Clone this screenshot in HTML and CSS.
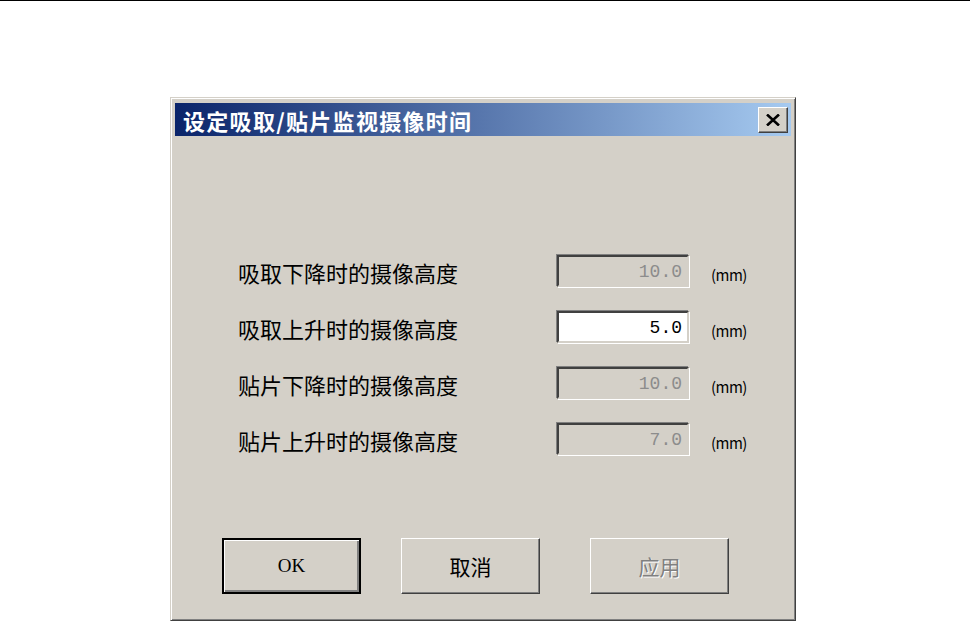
FILE: index.html
```html
<!DOCTYPE html>
<html lang="zh-CN">
<head>
    <meta charset="UTF-8">
    <title>设定吸取/贴片监视摄像时间</title>
    <link rel="stylesheet" href="styles.css">
</head>
<body>

<div class="top-rule"></div>

<div class="dialog">
    <div class="titlebar">
        <span class="title">设定吸取/贴片监视摄像时间</span>
        <button class="close-btn" type="button" aria-label="关闭">
            <svg width="14" height="12" viewBox="0 0 14 12">
                <path d="M1 0.5 L13 11.5 M13 0.5 L1 11.5" stroke="#000" stroke-width="2.6" fill="none"/>
            </svg>
        </button>
    </div>

    <div class="body">
        <div class="fields">
            <label class="field-label">吸取下降时的摄像高度</label>
            <input class="num" type="text" value="10.0" disabled>
            <span class="unit">(mm)</span>

            <label class="field-label">吸取上升时的摄像高度</label>
            <input class="num" type="text" value="5.0">
            <span class="unit">(mm)</span>

            <label class="field-label">贴片下降时的摄像高度</label>
            <input class="num" type="text" value="10.0" disabled>
            <span class="unit">(mm)</span>

            <label class="field-label">贴片上升时的摄像高度</label>
            <input class="num" type="text" value="7.0" disabled>
            <span class="unit">(mm)</span>
        </div>

        <div class="actions">
            <button class="btn btn-default" type="button">OK</button>
            <button class="btn btn-cancel" type="button">取消</button>
            <button class="btn btn-apply" type="button" disabled>应用</button>
        </div>
    </div>
</div>

</body>
</html>
```

FILE: styles.css
```css
/* Reset */
* {
    margin: 0;
    padding: 0;
    box-sizing: border-box;
}

body {
    background: #fff;
    font-family: 'Noto Sans CJK SC', 'Liberation Sans', sans-serif;
    height: 621px;
    overflow: hidden;
}

/* Black line at the very top */
.top-rule {
    height: 1px;
    background: #000;
}

/* Window frame (classic raised look) */
.dialog {
    margin: 96px 0 0 170px;
    width: 626px;
    height: 524px;
    background: #d4d0c8;
    border: 1px solid;
    border-color: #d4d0c8 #404040 #404040 #d4d0c8;
    box-shadow: inset 1px 1px 0 #fff, inset -1px -1px 0 #808080;
    padding: 5px 4px 4px 4px;
}

/* Title bar */
.titlebar {
    height: 33px;
    background: linear-gradient(to right, #0a246a, #a6caf0);
    display: flex;
    align-items: center;
    justify-content: space-between;
    padding: 0 3px 0 8px;
}

.title {
    color: #fff;
    font-weight: bold;
    font-size: 22px;
    letter-spacing: 1.3px;
    line-height: 1;
}

.close-btn {
    width: 30px;
    height: 26px;
    background: #d4d0c8;
    border: 1px solid;
    border-color: #fff #404040 #404040 #fff;
    box-shadow: inset -1px -1px 0 #808080;
    display: flex;
    align-items: center;
    justify-content: center;
}

/* Dialog content */
.body {
    padding: 119px 0 0 63px;
}

.fields {
    display: grid;
    grid-template-columns: 319px 132px auto;
    grid-auto-rows: 32px;
    row-gap: 24px;
    align-items: center;
}

.field-label {
    font-size: 22px;
    color: #000;
    line-height: 1;
    padding-top: 2px;
}

.num {
    width: 132px;
    height: 32px;
    font-family: 'Liberation Mono', monospace;
    font-size: 18px;
    text-align: right;
    padding: 2px 5px 0 0;
    background: #fff;
    color: #000;
    border: 2px solid;
    border-color: #404040 #d4d0c8 #d4d0c8 #404040;
    box-shadow: -1px -1px 0 #808080, 1px 1px 0 #fff;
    outline: none;
}

.num:disabled {
    background: #d4d0c8;
    color: #8c8c8c;
}

.unit {
    font-size: 15px;
    color: #000;
    padding: 6px 0 0 22px;
    letter-spacing: -0.5px;
}

/* Buttons row */
.actions {
    display: flex;
    margin: 83px 0 0 -16px;
}

.btn {
    width: 139px;
    height: 56px;
    background: #d4d0c8;
    font-family: 'Noto Sans CJK SC', sans-serif;
    font-size: 21px;
    color: #000;
    border: 1px solid;
    border-color: #fff #404040 #404040 #fff;
    box-shadow: inset -1px -1px 0 #808080, inset 1px 1px 0 #d4d0c8;
}

.btn-default {
    border: 2px solid #000;
    box-shadow: inset 1px 1px 0 #fff, inset -2px -2px 0 #808080;
    font-family: 'Liberation Serif', serif;
    font-size: 19px;
}

.btn-cancel {
    margin-left: 40px;
}

.btn-apply {
    margin-left: 50px;
    color: #808080;
    text-shadow: 1px 1px 0 #fff;
}
```
